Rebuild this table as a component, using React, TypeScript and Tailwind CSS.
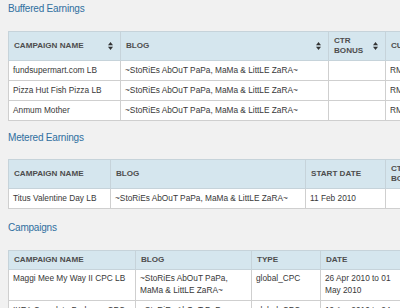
import React from "react";

const BLOG = "~StoRiEs AbOuT PaPa, MaMa & LittLE ZaRA~";

function SortIcon() {
  return (
    <svg width="5" height="8" viewBox="0 0 5 8" className="shrink-0">
      <path d="M2.5 0 L5 3.2 L0 3.2 Z" fill="#333" />
      <path d="M2.5 8 L5 4.8 L0 4.8 Z" fill="#333" />
    </svg>
  );
}

function Th({ children, sort }: { children: React.ReactNode; sort?: boolean }) {
  return (
    <th className="border border-[#c6d3da] bg-[#d5e6ee] px-[5px] py-[3.5px] text-left align-middle text-[8.1px] font-bold uppercase leading-[10.5px] text-[#4d4d4d]">
      <div className="flex items-center justify-between gap-[3px]">
        <span>{children}</span>
        {sort ? (
          <span className="mr-[2px]">
            <SortIcon />
          </span>
        ) : null}
      </div>
    </th>
  );
}

function Td({ children }: { children?: React.ReactNode }) {
  return (
    <td className="whitespace-nowrap overflow-hidden border border-[#cfcfcf] bg-white pl-[4px] pr-[4px] pt-[3.5px] pb-[4px] align-top text-[8.3px] leading-[11.5px] text-[#383838]">
      {children}
    </td>
  );
}

function Title({ children, className }: { children: React.ReactNode; className: string }) {
  return (
    <div className={`text-[10px] leading-[13px] tracking-[-0.2px] text-[#2f6f9f] ${className}`}>
      {children}
    </div>
  );
}

export default function App() {
  return (
    <div
      className="w-[400px] h-[308px] overflow-hidden bg-[#f1f1f1] pl-[8px] pt-[2px]"
      style={{ fontFamily: '"Liberation Sans", Arial, sans-serif' }}
    >
      <Title className="mb-[16px]">Buffered Earnings</Title>
      <table className="w-[480px] table-fixed border-collapse">
        <colgroup>
          <col className="w-[112px]" />
          <col className="w-[208px]" />
          <col className="w-[57px]" />
          <col className="w-[103px]" />
        </colgroup>
        <thead>
          <tr>
            <Th sort>Campaign Name</Th>
            <Th sort>Blog</Th>
            <Th sort>
              CTR
              <br />
              Bonus
            </Th>
            <Th sort>Current</Th>
          </tr>
        </thead>
        <tbody>
          {["fundsupermart.com LB", "Pizza Hut Fish Pizza LB", "Anmum Mother"].map((n) => (
            <tr key={n}>
              <Td>{n}</Td>
              <Td>{BLOG}</Td>
              <Td></Td>
              <Td>RM 0.00</Td>
            </tr>
          ))}
        </tbody>
      </table>

      <Title className="mt-[10px] mb-[15px]">Metered Earnings</Title>
      <table className="w-[480px] table-fixed border-collapse">
        <colgroup>
          <col className="w-[102px]" />
          <col className="w-[195px]" />
          <col className="w-[80px]" />
          <col className="w-[103px]" />
        </colgroup>
        <thead>
          <tr>
            <Th>Campaign Name</Th>
            <Th>Blog</Th>
            <Th>Start Date</Th>
            <Th>
              CTR
              <br />
              Bonus
            </Th>
          </tr>
        </thead>
        <tbody>
          <tr>
            <Td>Titus Valentine Day LB</Td>
            <Td>{BLOG}</Td>
            <Td>11 Feb 2010</Td>
            <Td></Td>
          </tr>
        </tbody>
      </table>

      <Title className="mt-[12px] mb-[16px]">Campaigns</Title>
      <table className="w-[480px] table-fixed border-collapse">
        <colgroup>
          <col className="w-[127px]" />
          <col className="w-[116px]" />
          <col className="w-[69px]" />
          <col className="w-[82px]" />
          <col className="w-[86px]" />
        </colgroup>
        <thead>
          <tr>
            <Th>Campaign Name</Th>
            <Th>Blog</Th>
            <Th>Type</Th>
            <Th>Date</Th>
            <Th>Status</Th>
          </tr>
        </thead>
        <tbody>
          <tr>
            <Td>Maggi Mee My Way II CPC LB</Td>
            <Td>
              ~StoRiEs AbOuT PaPa,
              <br />
              MaMa &amp; LittLE ZaRA~
            </Td>
            <Td>global_CPC</Td>
            <Td>
              26 Apr 2010 to 01
              <br />
              May 2010
            </Td>
            <Td>Active</Td>
          </tr>
          <tr>
            <Td>IKEA Complete Bedroom CPC</Td>
            <Td>
              ~StoRiEs AbOuT PaPa,
              <br />
              MaMa &amp; LittLE ZaRA~
            </Td>
            <Td>global_CPC</Td>
            <Td>
              19 Apr 2010 to 24
              <br />
              Apr 2010
            </Td>
            <Td>Active</Td>
          </tr>
        </tbody>
      </table>
    </div>
  );
}
